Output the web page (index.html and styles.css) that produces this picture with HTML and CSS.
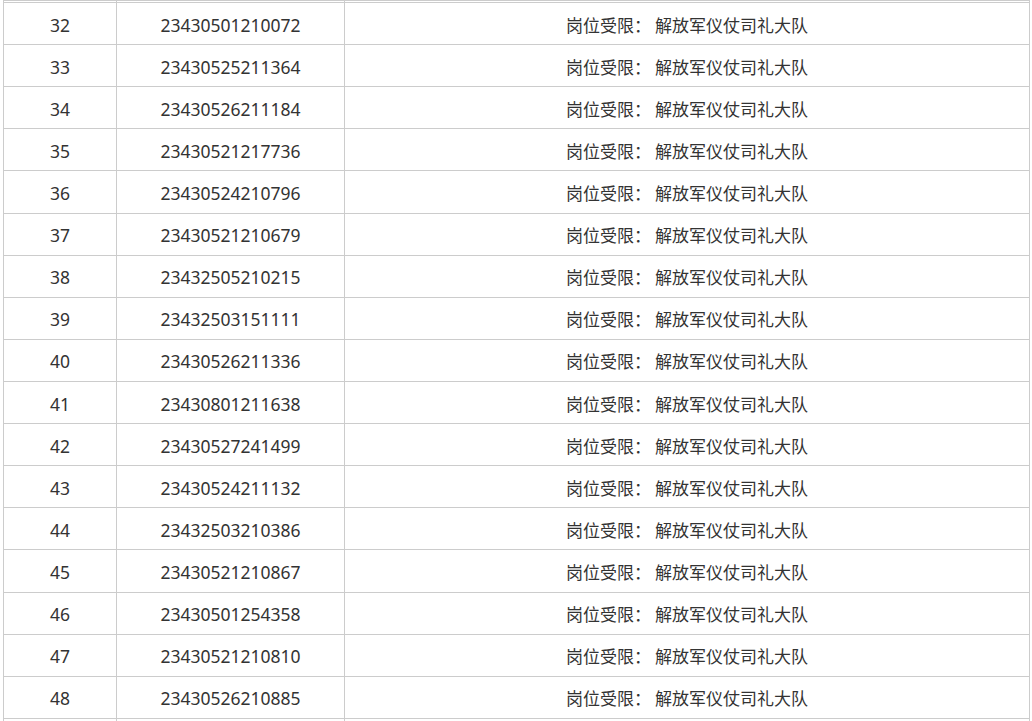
FILE: index.html
```html
<!DOCTYPE html>
<html lang="zh-CN">
<head>
<meta charset="utf-8">
<title>岗位受限名单</title>
<link rel="stylesheet" href="styles.css">
</head>
<body>
<div class="page">
<table class="list">
<colgroup><col class="c1"><col class="c2"><col class="c3"></colgroup>
<tbody>
<tr class="cut"><td></td><td></td><td></td></tr>
<tr><td class="num">32</td><td class="num">23430501210072</td><td>岗位受限： 解放军仪仗司礼大队</td></tr>
<tr><td class="num">33</td><td class="num">23430525211364</td><td>岗位受限： 解放军仪仗司礼大队</td></tr>
<tr><td class="num">34</td><td class="num">23430526211184</td><td>岗位受限： 解放军仪仗司礼大队</td></tr>
<tr><td class="num">35</td><td class="num">23430521217736</td><td>岗位受限： 解放军仪仗司礼大队</td></tr>
<tr><td class="num">36</td><td class="num">23430524210796</td><td>岗位受限： 解放军仪仗司礼大队</td></tr>
<tr><td class="num">37</td><td class="num">23430521210679</td><td>岗位受限： 解放军仪仗司礼大队</td></tr>
<tr><td class="num">38</td><td class="num">23432505210215</td><td>岗位受限： 解放军仪仗司礼大队</td></tr>
<tr><td class="num">39</td><td class="num">23432503151111</td><td>岗位受限： 解放军仪仗司礼大队</td></tr>
<tr><td class="num">40</td><td class="num">23430526211336</td><td>岗位受限： 解放军仪仗司礼大队</td></tr>
<tr><td class="num">41</td><td class="num">23430801211638</td><td>岗位受限： 解放军仪仗司礼大队</td></tr>
<tr><td class="num">42</td><td class="num">23430527241499</td><td>岗位受限： 解放军仪仗司礼大队</td></tr>
<tr><td class="num">43</td><td class="num">23430524211132</td><td>岗位受限： 解放军仪仗司礼大队</td></tr>
<tr><td class="num">44</td><td class="num">23432503210386</td><td>岗位受限： 解放军仪仗司礼大队</td></tr>
<tr><td class="num">45</td><td class="num">23430521210867</td><td>岗位受限： 解放军仪仗司礼大队</td></tr>
<tr><td class="num">46</td><td class="num">23430501254358</td><td>岗位受限： 解放军仪仗司礼大队</td></tr>
<tr><td class="num">47</td><td class="num">23430521210810</td><td>岗位受限： 解放军仪仗司礼大队</td></tr>
<tr><td class="num">48</td><td class="num">23430526210885</td><td>岗位受限： 解放军仪仗司礼大队</td></tr>
<tr><td></td><td></td><td></td></tr>
</tbody>
</table>
</div>
</body>
</html>
```
FILE: styles.css
```css
html, body {
  margin: 0;
  padding: 0;
  background: #fff;
}
.page {
  padding-left: 3px;
  height: 721px;
  overflow: hidden;
}
.list {
  border-collapse: collapse;
  table-layout: fixed;
  width: 1026px;
  font-family: "Noto Sans CJK SC", "Noto Sans", sans-serif;
  font-size: 17px;
  color: #333;
}
.c1 { width: 113px; }
.c2 { width: 228px; }
.c3 { width: 685px; }
.list td {
  border: 1px solid #ccc;
  text-align: center;
  vertical-align: middle;
  height: 42.12px;
  padding: 2px 0 0;
  box-sizing: border-box;
  line-height: 20px;
}
.list td.num {
  font-family: "Noto Sans", "Noto Sans CJK SC", sans-serif;
  font-size: 17.5px;
}
.list tr.cut td {
  height: 2px;
  padding: 0;
}
```
